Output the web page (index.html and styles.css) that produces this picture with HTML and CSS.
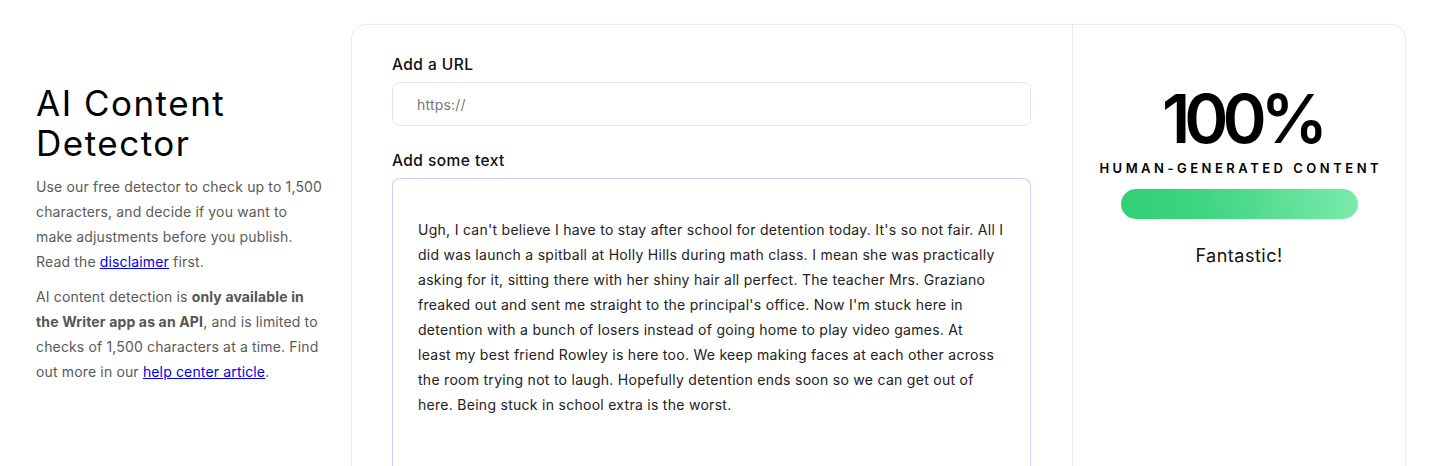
FILE: index.html
```html
<!DOCTYPE html>
<html lang="en">
<head>
<meta charset="utf-8">
<title>AI Content Detector</title>
<link rel="stylesheet" href="styles.css">
</head>
<body>
<div class="page">
  <aside class="intro">
    <h1 class="title">AI Content Detector</h1>
    <p class="desc">Use our free detector to check up to 1,500 characters, and decide if you want to make adjustments before you publish. Read the <a href="#">disclaimer</a> first.</p>
    <p class="desc">AI content detection is <b>only available in the Writer app as an API</b>, and is limited to checks of 1,500 characters at a time. Find out more in our <a href="#">help center article</a>.</p>
  </aside>
  <main class="card">
    <section class="inputs">
      <label class="label">Add a URL</label>
      <div class="url-field">https://</div>
      <label class="label label-text">Add some text</label>
      <div class="text-field">Ugh, I can't believe I have to stay after school for detention today. It's so not fair. All I<br>did was launch a spitball at Holly Hills during math class. I mean she was practically<br>asking for it, sitting there with her shiny hair all perfect. The teacher Mrs. Graziano<br>freaked out and sent me straight to the principal's office. Now I'm stuck here in<br>detention with a bunch of losers instead of going home to play video games. At<br>least my best friend Rowley is here too. We keep making faces at each other across<br>the room trying not to laugh. Hopefully detention ends soon so we can get out of<br>here. Being stuck in school extra is the worst.</div>
    </section>
    <section class="result">
      <div class="score">100%</div>
      <div class="score-label">HUMAN-GENERATED CONTENT</div>
      <div class="bar"></div>
      <div class="verdict">Fantastic!</div>
    </section>
  </main>
</div>
</body>
</html>
```

FILE: styles.css
```css
html, body {
  margin: 0;
  padding: 0;
  background: #ffffff;
  overflow: hidden;
}
body {
  font-family: "Inter", "Open Sans", sans-serif;
  color: #111;
}
.page {
  display: flex;
  align-items: flex-start;
  padding: 24px 0 0 36px;
  height: 442px;
}
.intro {
  width: 288px;
  flex: none;
  margin-right: 27px;
  padding-top: 59px;
}
.title {
  margin: 0 0 11px 0;
  font-size: 35px;
  line-height: 40px;
  font-weight: 400;
  color: #000;
  letter-spacing: 1.5px;
}
.desc {
  margin: 0 0 10px 0;
  font-size: 14px;
  line-height: 25px;
  letter-spacing: 0.15px;
  color: #5a5a5a;
}
.desc b {
  font-weight: 700;
  color: #555;
}
.desc a {
  color: #0000ee;
  text-decoration: underline;
}
.card {
  flex: none;
  width: 1055px;
  height: 480px;
  border: 1px solid #e7e9f3;
  border-radius: 14px;
  display: flex;
  box-sizing: border-box;
}
.inputs {
  width: 721px;
  flex: none;
  box-sizing: border-box;
  padding: 28px 41px 0 40px;
  border-right: 1px solid #e7e9f3;
  display: flex;
  flex-direction: column;
}
.label {
  font-size: 15.5px;
  line-height: 24px;
  font-weight: 500;
  letter-spacing: 0.45px;
  color: #111;
}
.url-field {
  margin-top: 5px;
  height: 44px;
  box-sizing: border-box;
  border: 1px solid #e4e6ef;
  border-radius: 8px;
  padding: 0 24px;
  display: flex;
  align-items: center;
  font-size: 14px;
  letter-spacing: 0.2px;
  color: #777;
}
.label-text {
  margin-top: 23px;
}
.text-field {
  margin-top: 5px;
  flex: 1;
  border: 1px solid #c9cffa;
  border-bottom: none;
  border-radius: 8px 8px 0 0;
  padding: 38px 24px 0 25px;
  font-size: 14px;
  line-height: 25px;
  letter-spacing: 0.28px;
  white-space: nowrap;
  color: #222;
}
.result {
  flex: 1;
  display: flex;
  flex-direction: column;
  align-items: center;
  padding-top: 56px;
}
.score {
  font-size: 67px;
  line-height: 76px;
  font-weight: 600;
  color: #000;
  letter-spacing: -6px;
  margin-right: -6px;
}
.score-label {
  margin-top: 2px;
  font-size: 13px;
  line-height: 18px;
  font-weight: 600;
  letter-spacing: 3.5px;
  margin-right: -3.5px;
  color: #000;
}
.bar {
  margin-top: 12px;
  width: 237px;
  height: 30px;
  border-radius: 15px;
  background: linear-gradient(80deg, #31cf76 0%, #3fd581 35%, #5fe098 70%, #7aebad 100%);
}
.verdict {
  margin-top: 24px;
  font-size: 18px;
  line-height: 26px;
  letter-spacing: 0.5px;
  color: #111;
}
```
